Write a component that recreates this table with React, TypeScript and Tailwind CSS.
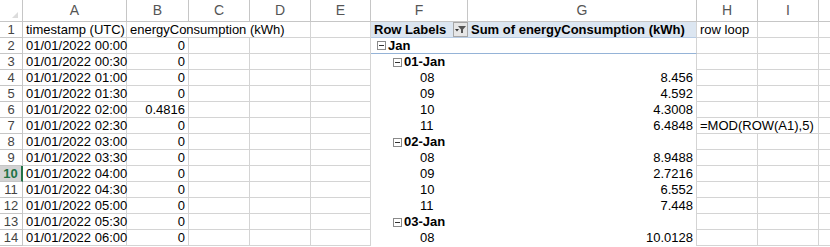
import React from 'react';

type Cell = {
  text?: React.ReactNode;
  align?: 'left' | 'right';
  bold?: boolean;
  noRight?: boolean;
  noBottom?: boolean;
  extra?: string;
};

// J is only a sliver at the right edge, its letter is out of view
const COLS: { key: string; label: string; w: string }[] = [
  { key: 'A', label: 'A', w: 'w-[104px]' },
  { key: 'B', label: 'B', w: 'w-[62px]' },
  { key: 'C', label: 'C', w: 'w-[61px]' },
  { key: 'D', label: 'D', w: 'w-[61px]' },
  { key: 'E', label: 'E', w: 'w-[60px]' },
  { key: 'F', label: 'F', w: 'w-[97px]' },
  { key: 'G', label: 'G', w: 'w-[229px]' },
  { key: 'H', label: 'H', w: 'w-[61px]' },
  { key: 'I', label: 'I', w: 'w-[61px]' },
  { key: 'J', label: '', w: 'w-[61px]' },
];

const times = [
  '00:00', '00:30', '01:00', '01:30', '02:00', '02:30', '03:00',
  '03:30', '04:00', '04:30', '05:00', '05:30', '06:00',
];

// pivot rows 2..14: [label, level, value]
const pivot: [string, number, string][] = [
  ['Jan', 0, ''],
  ['01-Jan', 1, ''],
  ['08', 2, '8.456'],
  ['09', 2, '4.592'],
  ['10', 2, '4.3008'],
  ['11', 2, '6.4848'],
  ['02-Jan', 1, ''],
  ['08', 2, '8.9488'],
  ['09', 2, '2.7216'],
  ['10', 2, '6.552'],
  ['11', 2, '7.448'],
  ['03-Jan', 1, ''],
  ['08', 2, '10.0128'],
];

function Collapse() {
  return (
    <svg width="9" height="9" viewBox="0 0 9 9" className="mr-[2px] shrink-0">
      <rect x="0.5" y="0.5" width="8" height="8" fill="#fff" stroke="#8a8a8a" />
      <line x1="2" y1="4.5" x2="7" y2="4.5" stroke="#333" />
    </svg>
  );
}

function FilterButton() {
  return (
    <span className="flex h-[15px] w-[15px] items-center justify-center border border-[#a6a6a6] bg-[#e6e6e6]">
      <svg width="11" height="9" viewBox="0 0 11 9">
        <path d="M3 1h8L8 4.5V8H6V4.5z" fill="#555" />
        <path d="M0 4h4L2 6.5z" fill="#333" />
      </svg>
    </span>
  );
}

function getCell(row: number, col: string): Cell {
  if (row === 1) {
    switch (col) {
      case 'A': return { text: 'timestamp (UTC)' };
      case 'B': return { text: 'energyConsumption (kWh)', noRight: true };
      case 'C': return { noRight: true };
      case 'F':
        return {
          text: (
            <span className="flex w-full items-center justify-between">
              <span className="font-bold">Row Labels</span>
              <FilterButton />
            </span>
          ),
          noRight: true,
          extra: 'bg-[#dce6f1] border-b-[#b8cce4] pr-0',
        };
      case 'G':
        return {
          text: 'Sum of energyConsumption (kWh)',
          bold: true,
          extra: 'bg-[#dce6f1] border-b-[#b8cce4]',
        };
      case 'H': return { text: 'row loop' };
      default: return {};
    }
  }
  const i = row - 2;
  if (col === 'A') return { text: `01/01/2022 ${times[i]}` };
  if (col === 'B') return { text: row === 6 ? '0.4816' : '0', align: 'right' };
  if (col === 'F') {
    const [label, level] = pivot[i];
    const pad = level === 0 ? 'pl-[6px]' : level === 1 ? 'pl-[22px]' : 'pl-[49px]';
    return {
      text: level < 2 ? (
        <span className="flex items-center font-bold">
          <Collapse />
          {label}
        </span>
      ) : label,
      noRight: true,
      noBottom: row !== 2,
      extra: `${pad} ${row === 2 ? 'border-b-[#95b3d7]' : ''}`,
    };
  }
  if (col === 'G') {
    return {
      text: pivot[i][2],
      align: 'right',
      noBottom: row !== 2,
      extra: row === 2 ? 'border-b-[#95b3d7]' : '',
    };
  }
  if (col === 'H' && row === 7) return { text: '=MOD(ROW(A1),5)', noRight: true };
  return {};
}

function RowHeader({ n }: { n: number }) {
  const sel = n === 10;
  return (
    <div
      className={`flex h-4 w-[23px] shrink-0 items-center justify-center border-b text-[13px] leading-4 ${
        sel
          ? 'border-r-2 border-r-[#217346] border-b-[#c6c6c6] bg-[#d2d2d2] font-bold text-[#217346]'
          : 'border-r border-[#c6c6c6] text-[#444]'
      }`}
    >
      {n}
    </div>
  );
}

function Row({ n }: { n: number }) {
  return (
    <div className="flex">
      <RowHeader n={n} />
      {COLS.map(c => {
        const cell = getCell(n, c.key);
        return (
          <div
            key={c.key}
            className={`flex h-4 shrink-0 items-center whitespace-nowrap border-[#d4d4d4] px-[3px] leading-4 ${c.w} ${
              cell.noRight ? '' : 'border-r'
            } ${cell.noBottom ? '' : 'border-b'} ${cell.align === 'right' ? 'justify-end' : ''} ${
              cell.bold ? 'font-bold' : ''
            } ${cell.extra ?? ''}`}
          >
            {cell.text}
          </div>
        );
      })}
    </div>
  );
}

export default function App() {
  const rows = Array.from({ length: 14 }, (_, i) => i + 1);
  return (
    <div className="h-[247px] w-[830px] overflow-hidden bg-white text-[13px] text-black [font-family:'Liberation_Sans',Arial,sans-serif]">
      {/* Column headers */}
      <div className="flex h-[22px]">
        <div className="flex h-[22px] w-[23px] shrink-0 items-end justify-end border-b border-r border-[#c6c6c6] pb-[3px] pr-[4px]">
          <svg width="6" height="6" viewBox="0 0 6 6">
            <path d="M6 0V6H0z" fill="#dcdcdc" />
          </svg>
        </div>
        {COLS.map(c => (
          <div
            key={c.key}
            className={`flex h-[22px] shrink-0 items-center justify-center border-b border-r border-[#c6c6c6] text-[14px] text-[#555] ${c.w}`}
          >
            {c.label}
          </div>
        ))}
      </div>
      {rows.map(n => (
        <Row key={n} n={n} />
      ))}
    </div>
  );
}
